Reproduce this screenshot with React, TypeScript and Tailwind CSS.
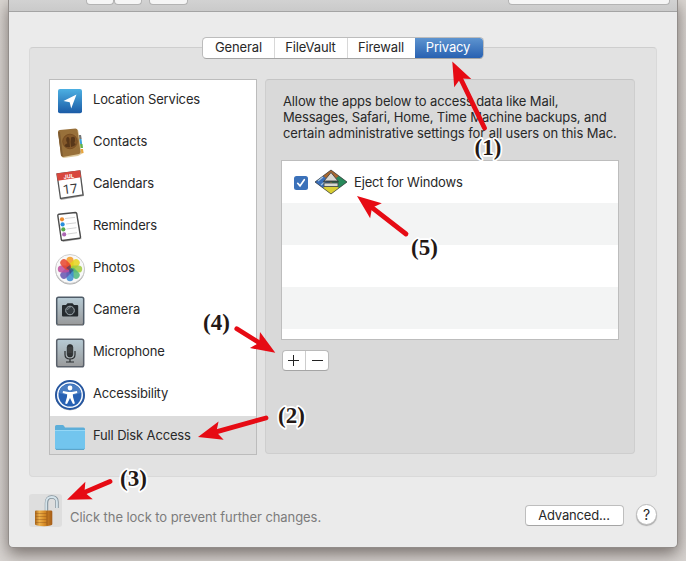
import React from "react";

const LocationIcon = () => (
  <svg width="30" height="32" viewBox="0 0 30 32">
    <defs>
      <linearGradient id="loc" x1="0" y1="0" x2="0" y2="1">
        <stop offset="0" stopColor="#4cb0e2" />
        <stop offset="1" stopColor="#1b5ba6" />
      </linearGradient>
    </defs>
    <rect x="3" y="4" width="24" height="24.3" rx="2" fill="url(#loc)" />
    <path d="M21.500 9.500 16.200 23.500 14.700 17.300 8.500 16Z" fill="#fff" />
  </svg>
);

const ContactsIcon = () => (
  <svg width="30" height="32" viewBox="0 0 30 32">
    <path d="M22 8h4l.7 4h-3z" fill="#777" />
    <path d="M23 12h3.500l.6 5h-4z" fill="#3da4dc" />
    <path d="M24 17h3.500l.5 4h-4z" fill="#61b34b" />
    <path d="M25 22h3l.6 4-4 1z" fill="#e8a43c" />
    <path d="M3 4.500 21 2.200q2 0 2.300 1.500L26.500 27l-3.500 2-14.500 2q-1.600-.3-2-2z" fill="#ddc89c" />
    <path d="M3 4.500q.2-1.300 1.800-1.500L20.500 1.500q1.600 0 2 1.500l3 22q0 1.500-1.500 2L8 30q-1.500-.2-2-1.500z" fill="#98703a" />
    <path d="m3 5 3 23.500 2 1L5 5z" fill="#7d5a30" />
    <circle cx="15" cy="14.500" r="7.300" fill="#84592a" stroke="#73491f" strokeWidth=".8" />
    <path d="M9.500 19q.5-2 3-2.700-1.700-2-1.300-4.600Q12 9 14 10.500q1 1 .6 5l.4 4.500q-3 .8-5.500-1M16 10.500q3.200-1.700 4 .8.500 2.600-.7 4.700 1 .9 1.700 1-1.800 3-5 3-1-5 0-9.500" fill="#583719" />
  </svg>
);

const CalendarIcon = () => (
  <svg width="30" height="32" viewBox="0 0 30 32">
    <path d="m2 6 23-3.500L29 27 6 31Z" fill="#aaa" />
    <path d="m2 5 23-3 3 24L5.500 29.500Z" fill="#fff" stroke="#555" strokeWidth="1.300" />
    <path d="m1.500 4.500 23.500-3.200 1.200 7L2.700 11.700Z" fill="#d8473d" />
    <g transform="rotate(-7 15 18)">
      <text x="15" y="9.200" textAnchor="middle" fontSize="5.500" fontWeight="700" fill="#fff" fontFamily="Inter, sans-serif">JUL</text>
      <text x="15" y="24.500" textAnchor="middle" fontSize="13" fill="#393939" fontFamily="Roboto, sans-serif">17</text>
    </g>
  </svg>
);

const RemindersIcon = () => (
  <svg width="30" height="32" viewBox="0 0 30 32">
    <path d="m4 4 18-2 4.500 26L8 31Z" fill="#bbb" />
    <path d="M2.800 4.500q0-1 1-1.200L20.500 1.500q1 0 1.200 1L25.500 26q0 1-1 1.300L7.500 29.500q-1 0-1.200-1z" fill="#fff" stroke="#4b4b4b" strokeWidth="1.400" />
    <path d="m10 7.500 10-1.100M11 13l10-1.200M11.500 18l10-1.300M12.500 23l9.500-1.300" stroke="#c9c9c9" strokeWidth=".8" />
    <circle cx="7" cy="8.300" r="2.100" fill="#eb8b31" />
    <circle cx="7.600" cy="13.400" r="2.100" fill="#278edb" />
    <circle cx="8.300" cy="18.400" r="2.100" fill="#55ad4b" />
    <circle cx="9.200" cy="23.400" r="2.100" fill="#ab65b2" />
  </svg>
);

const petals = ["#f49a25", "#e6d51b", "#a1cb3c", "#4eb77c", "#3d8cd2", "#6554b0", "#bd4c9c", "#e7442d"];
const PhotosIcon = () => (
  <svg width="32" height="32" viewBox="0 0 32 32">
    <circle cx="16" cy="17" r="14.600" fill="#aaa" />
    <circle cx="16" cy="16" r="14.500" fill="#f8f8f8" stroke="#c3c3c3" strokeWidth=".8" />
    {petals.map((color, i) => (
      <rect key={color} x="12.400" y="3.800" width="7.200" height="12" rx="3.600" fill={color} fillOpacity=".85" transform={`rotate(${i * 45} 16 16)`} />
    ))}
    <path d="m16 12 1 3 3 2-4 4-1-4-3-2Z" fill="#293b70" fillOpacity=".55" />
  </svg>
);

const CameraIcon = () => (
  <svg width="30" height="32" viewBox="0 0 30 32">
    <defs>
      <linearGradient id="steel" x1="0" y1="0" x2="0" y2="1">
        <stop stopColor="#b7cbd5" />
        <stop offset="1" stopColor="#999a9b" />
      </linearGradient>
    </defs>
    <rect x="1.700" y="2.200" width="27" height="27.600" rx="1.800" fill="url(#steel)" stroke="#4f5b67" strokeWidth="1.500" />
    <path d="M2 29.500h26" stroke="#707070" strokeWidth="1" />
    <path d="M8 10h3l1.500-1.800h5L19 10h3.200q1 0 1 1v9.500q0 1-1 1H8q-1 0-1-1V11q0-1 1-1" fill="#252a2e" />
    <circle cx="15" cy="15.500" r="4.300" fill="#363d42" stroke="#a2acb2" />
    <path d="M12.500 15q0-2.500 3-2.500" fill="none" stroke="#808a90" />
  </svg>
);

const MicIcon = () => (
  <svg width="30" height="32" viewBox="0 0 30 32">
    <rect x="1.700" y="2.200" width="27" height="27.600" rx="1.800" fill="url(#steel)" stroke="#59606a" strokeWidth="1.500" />
    <rect x="12.200" y="7.500" width="5.600" height="12.500" rx="2.800" fill="#303335" stroke="#1f2122" strokeWidth=".6" />
    <path d="M10 14v3.500q0 4.500 5 4.500t5-4.500V14M15 22v3M11 25h8" fill="none" stroke="#2b2e30" strokeWidth="1.200" />
    <path d="M13 11h4m-4 2h4m-4 2h4" stroke="#666" strokeWidth=".5" />
  </svg>
);

const AccessibilityIcon = () => (
  <svg width="32" height="32" viewBox="0 0 32 32">
    <circle cx="16" cy="16.500" r="14.500" fill="#fff" stroke="#bbb" />
    <circle cx="16" cy="16" r="14" fill="#f7fbff" stroke="#2757a0" strokeWidth="2" />
    <circle cx="16" cy="16" r="11.500" fill="#2861b3" />
    <path d="M5 14a11 9 0 0 1 22 0q-11 4-22 0" fill="#4a7dc2" />
    <circle cx="16" cy="9" r="2.400" fill="#fff" />
    <path d="m9 12 5.300 1h3.400l5.300-1 .3 1.900-4.500 1.400.3 3 1.800 6.200-1.900.6-3-6.200-3 6.200-1.900-.6 1.800-6.200.3-3-4.500-1.400Z" fill="#fff" />
  </svg>
);

const FolderIcon = () => (
  <svg width="32" height="32" viewBox="0 0 32 32">
    <path d="M1 5.500Q1 4 2.500 4h6q1 0 1.600 1l.9 1.500h18.500q1.500 0 1.500 1.500v19q0 1.500-1.500 1.500h-27Q1 28.500 1 27z" fill="#5caed9" />
    <path d="M1 9h30v17.500q0 1.200-1.200 1.200H2.200Q1 27.700 1 26.500z" fill="#72c5ee" />
    <path d="M1 9.500h30" stroke="#94d7f6" />
    <path d="M2 28.500h28" stroke="#4d9dc4" strokeWidth=".8" />
  </svg>
);

const items = [
  { label: "Location Services", icon: <LocationIcon />, track: "tracking-[-0.17px]" },
  { label: "Contacts", icon: <ContactsIcon />, track: "tracking-[-0.08px]" },
  { label: "Calendars", icon: <CalendarIcon />, track: "tracking-[-0.15px]" },
  { label: "Reminders", icon: <RemindersIcon />, track: "tracking-[-0.13px]" },
  { label: "Photos", icon: <PhotosIcon />, track: "tracking-[-0.1px]" },
  { label: "Camera", icon: <CameraIcon />, track: "tracking-[-0.13px]" },
  { label: "Microphone", icon: <MicIcon />, track: "tracking-[-0.19px]" },
  { label: "Accessibility", icon: <AccessibilityIcon />, track: "tracking-[-0.19px]" },
  { label: "Full Disk Access", icon: <FolderIcon />, track: "tracking-[-0.15px]" },
];

const Sidebar = () => (
  <div className="h-[376px] w-[208px] shrink-0 overflow-hidden border border-[#bcbcbc] bg-white">
    {items.map((item, i) => (
      <div key={item.label} className={`flex h-[42px] items-center ${i === 8 ? "bg-[#dcdcdc]" : ""}`}>
        <div className="ml-1 flex w-8 shrink-0 justify-center">{item.icon}</div>
        <span className={`ml-[7px] whitespace-nowrap pb-1 ${item.track}`}>{item.label}</span>
      </div>
    ))}
  </div>
);

const EjectIcon = () => (
  <svg width="34" height="26" viewBox="0 0 34 26">
    <path d="M17 1 33 13 17 25 1 13Z" fill="#555" />
    <path d="m17 1 8 6-8 6-8-6Z" fill="#a8672f" />
    <path d="m9 7 8 6-8 6-8-6Z" fill="#386db9" />
    <path d="m25 7 8 6-8 6-8-6Z" fill="#27895a" />
    <path d="m17 13 8 6-8 6-8-6Z" fill="#d9ce32" />
    <path d="M17 1 33 13 17 25 1 13Z" fill="none" stroke="#3e4242" strokeWidth=".7" />
    <path d="m4 12 5-4M7 16l6-5" stroke="#a6c4df" strokeWidth="1.200" />
    <path d="m17 3.500 7 8.500H10Z" fill="#d8d8d3" stroke="#444" strokeWidth=".9" />
    <path d="M10 14h14v3.500H10z" fill="#d7d8d3" stroke="#474b4b" strokeWidth=".9" />
    <path d="M9 12.800h16" stroke="#333b3a" strokeWidth="1" />
  </svg>
);

const AppTable = () => (
  <div className="ml-[15px] mt-[19px] h-[180px] w-[338px] overflow-hidden border border-[#bdbdbd] bg-white">
    <div className="flex h-[42px] items-center">
      <div className="ml-3 mt-px flex size-[14px] items-center justify-center rounded-[2.5px] bg-[#3b71b9]">
        <svg width="14" height="14" viewBox="0 0 14 14"><path d="m3.700 7.300 2.300 2.600 4.300-6.200" fill="none" stroke="#fff" strokeWidth="1.700" strokeLinecap="round" /></svg>
      </div>
      <div className="ml-[6px]"><EjectIcon /></div>
      <span className="ml-[6px] whitespace-nowrap pb-px tracking-[-0.16px]">Eject for Windows</span>
    </div>
    <div className="h-[42px] bg-[#f3f4f4]" />
    <div className="h-[42px]" />
    <div className="h-[42px] bg-[#f3f4f4]" />
  </div>
);

const LockIcon = () => (
  <svg width="33" height="34" viewBox="0 0 33 34">
    <defs>
      <linearGradient id="gold">
        <stop stopColor="#a66218" /><stop offset=".25" stopColor="#eeb24c" /><stop offset=".55" stopColor="#d68b26" /><stop offset="1" stopColor="#a45c18" />
      </linearGradient>
    </defs>
    <path d="M17.500 17V9q0-6 5.200-6Q28 3 28 8v6" fill="none" stroke="#80909a" strokeWidth="3.400" />
    <path d="M17.200 17V9q0-6 5.300-6t5.400 5v6" fill="none" stroke="#d5e3ea" strokeWidth="1.900" />
    <path d="M6 17.500q0-1 1-1h15q1.300 0 1.300 1v12.800q0 1.600-8.300 2-9-.4-9-2z" fill="url(#gold)" />
    <path d="M6.500 19.500h11M6.500 22.500h11M6.500 25.500h11M6.500 28.500h11" stroke="#8b5119" strokeOpacity=".4" />
    <path d="M18 17v14.500" stroke="#905015" strokeWidth=".7" />
  </svg>
);

const arrows = [
  [452.3, 61.5, 484.500, 128],
  [198, 437, 266, 418],
  [67, 499.800, 110, 481.500],
  [275.300, 352.800, 236.800, 328.700],
  [357, 196, 406, 234],
];
const Arrows = () => (
  <svg className="pointer-events-none absolute inset-0" width="686" height="561">
    {arrows.map(([tx, ty, sx, sy]) => {
      const angle = (Math.atan2(ty - sy, tx - sx) * 180) / Math.PI;
      const len = Math.hypot(tx - sx, ty - sy);
      return (
        <g key={tx} transform={`translate(${tx} ${ty}) rotate(${angle})`} fill="#e60b14">
          <path d="M0 0-24-9.500-19 0-24 9.500Z" />
          <path d={`M-17 0H${-len}`} stroke="#e60b14" strokeWidth="4.800" strokeLinecap="round" />
        </g>
      );
    })}
    <g fontFamily="Liberation Serif, serif" fontWeight="700" fontSize="23" fill="#231815" stroke="#fff" strokeWidth="3.500" strokeLinejoin="round" paintOrder="stroke" textAnchor="middle">
      <text x="488" y="155">(1)</text>
      <text x="291.500" y="423">(2)</text>
      <text x="133.500" y="486">(3)</text>
      <text x="216.500" y="330">(4)</text>
      <text x="424.500" y="255">(5)</text>
    </g>
  </svg>
);

const Tabs = () => (
  <div className="relative z-10 mx-auto -mt-[11px] flex h-[22px] w-[282px] overflow-hidden rounded-[4.500px] border border-[#bcbcbc] border-b-[#a5a5a5] bg-white">
    <div className="flex w-[72px] items-center justify-center border-r border-[#d8d8d8] pb-[3px] tracking-[-0.1px]">General</div>
    <div className="flex w-[73px] items-center justify-center border-r border-[#d8d8d8] pb-[3px] pr-px tracking-[-0.15px]">FileVault</div>
    <div className="flex w-[67px] items-center justify-center pb-[3px] pr-px tracking-[-0.15px]">Firewall</div>
    <div className="-my-px -mr-px flex flex-1 items-center justify-center border-b border-[#2257a3] bg-linear-to-b from-[#6096d1] to-[#2861b1] pb-[2px] pr-[3px] tracking-[-0.15px] text-white">Privacy</div>
  </div>
);

export default function App() {
  return (
    <div className="relative h-[561px] w-[686px] overflow-hidden bg-linear-to-b from-[#dad6d2] via-[#d6d2ce] to-[#d8d4d1] [font-family:Inter,sans-serif] text-[13px] leading-4 text-[#282828]">
      <div className="mx-2 h-[548px] overflow-hidden rounded-b-[5px] border border-t-0 border-[#928d8a] bg-[#ebebeb] shadow-[0_6px_16px_#605754cc]">
        <div className="flex h-3 items-start border-b border-[#a4a4a4] bg-linear-to-b from-[#d2d2d2] to-[#cacaca]">
          <div className="ml-[77px] h-[5px] w-7 rounded-b-[4px] border border-t-0 border-[#b3b3b3] bg-[#f5f5f5]" />
          <div className="h-[5px] w-7 rounded-b-[4px] border border-t-0 border-[#b3b3b3] bg-[#f5f5f5]" />
          <div className="ml-[7px] h-[5px] w-[39px] rounded-b-[4px] border border-t-0 border-[#b3b3b3] bg-[#f5f5f5]" />
          <div className="ml-auto mr-[7px] h-[5px] w-[162px] rounded-b-[4px] border border-t-0 border-[#b3b3b3] bg-[#f5f5f5]" />
        </div>
        <div className="ml-5 mt-[35px] h-[430px] w-[628px] rounded-[4px] border border-[#d9d9d9] border-t-[#cecece] bg-[#e2e2e2]">
          <Tabs />
          <div className="ml-[19px] mt-5 flex gap-2">
            <Sidebar />
            <div className="h-[375px] w-[370px] rounded-[4px] border border-[#cecece] border-t-[#c5c5c5] bg-[#d9d9d9]">
              <p className="ml-[17px] mt-[13px] whitespace-nowrap">
                <span className="block tracking-[-0.13px]">Allow the apps below to access data like Mail,</span>
                <span className="block tracking-[-0.14px]">Messages, Safari, Home, Time Machine backups, and</span>
                <span className="block tracking-[-0.08px]">certain administrative settings for all users on this Mac.</span>
              </p>
              <AppTable />
              <div className="ml-4 mt-[10px] flex h-[21px] w-[47px] overflow-hidden rounded-[4px] border border-[#bababa] border-b-[#a5a5a5] bg-white">
                <div className="flex w-[23px] items-center justify-center border-r border-[#cdcdcd] pr-px"><svg width="11" height="11"><path d="M0 5.500h11M5.500 0v11" stroke="#222" /></svg></div>
                <div className="flex flex-1 items-center justify-center"><svg width="11" height="11"><path d="M0 5.500h11" stroke="#222" /></svg></div>
              </div>
            </div>
          </div>
        </div>
        <div className="ml-5 mt-[17px] flex h-9 w-[628px] items-start">
          <div className="h-[33px] w-[33px] rounded-[3px] bg-[#dedede]"><LockIcon /></div>
          <span className="ml-2 mt-[15px] whitespace-nowrap tracking-[-0.07px] text-[#7c7c7c]">Click the lock to prevent further changes.</span>
          <button className="ml-auto mt-[11px] flex h-[21px] w-[99px] items-center justify-center rounded-[4px] border border-[#bebebe] border-b-[#a5a5a5] bg-white pb-px pr-px tracking-[-0.17px]">Advanced...</button>
          <button className="ml-3 mt-[10px] flex size-[21px] items-center justify-center rounded-full border border-[#bcbcbc] bg-white text-[14px] shadow-[0_1px_1px_#aaa]">?</button>
        </div>
      </div>
      <Arrows />
    </div>
  );
}
